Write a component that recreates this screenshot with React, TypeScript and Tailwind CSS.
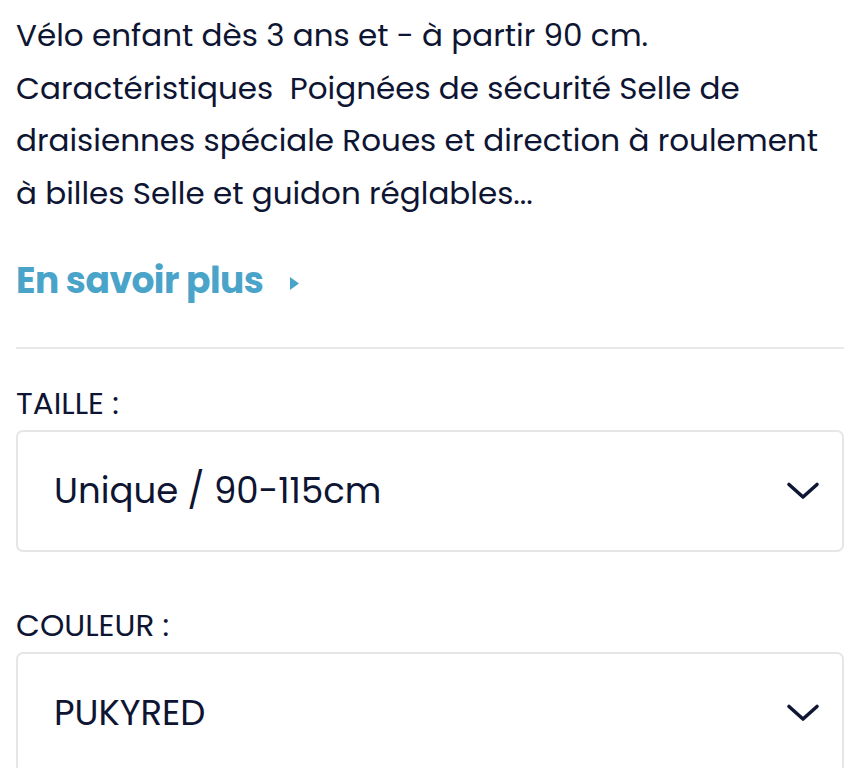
import React from "react";

const font = { fontFamily: 'Poppins, "Noto Sans", sans-serif' };

const Chevron = () => (
  <svg width="34" height="20" viewBox="0 0 34 20" fill="none">
    <path
      d="M3 3.5 L17 16 L31 3.5"
      stroke="#101735"
      strokeWidth="3.6"
      strokeLinecap="round"
      strokeLinejoin="round"
    />
  </svg>
);

const SelectBox = ({ value }: { value: string }) => (
  <button className="flex h-[122px] w-full items-center justify-between rounded-[7px] border-2 border-[#e6e6e8] bg-white pl-[36px] pr-[22px] text-left">
    <span className="text-[35.5px] leading-none text-[#0e1533]">{value}</span>
    <Chevron />
  </button>
);

export default function App() {
  return (
    <div className="min-h-screen bg-white px-4 pt-[9px]" style={font}>
      <p className="text-[31px] leading-[52.5px] text-[#0e1533]">
        Vélo enfant dès 3 ans et - à partir 90 cm.
        <br />
        Caractéristiques&nbsp; Poignées de sécurité Selle de
        <br />
        draisiennes spéciale Roues et direction à roulement
        <br />
        à billes Selle et guidon réglables...
      </p>

      <a
        href="#"
        className="mt-[42px] flex h-10 items-center gap-[26px] text-[36px] font-bold tracking-[-0.5px] text-[#4aa4ca]"
      >
        En savoir plus
        <svg width="11" height="15" viewBox="0 0 11 15" className="mt-1">
          <path d="M1 1 L10 7.5 L1 14 Z" fill="#4aa4ca" />
        </svg>
      </a>

      <div className="mt-[46px] h-[2px] w-full bg-[#e8e8e8]" />

      <div className="mt-[38px]">
        <div className="text-[31px] leading-8 text-[#0e1533]">TAILLE :</div>
        <div className="mt-[11px]">
          <SelectBox value="Unique / 90-115cm" />
        </div>
      </div>

      <div className="mt-[57px]">
        <div className="text-[31px] leading-8 text-[#0e1533]">COULEUR :</div>
        <div className="mt-[11px]">
          <SelectBox value="PUKYRED" />
        </div>
      </div>
    </div>
  );
}
